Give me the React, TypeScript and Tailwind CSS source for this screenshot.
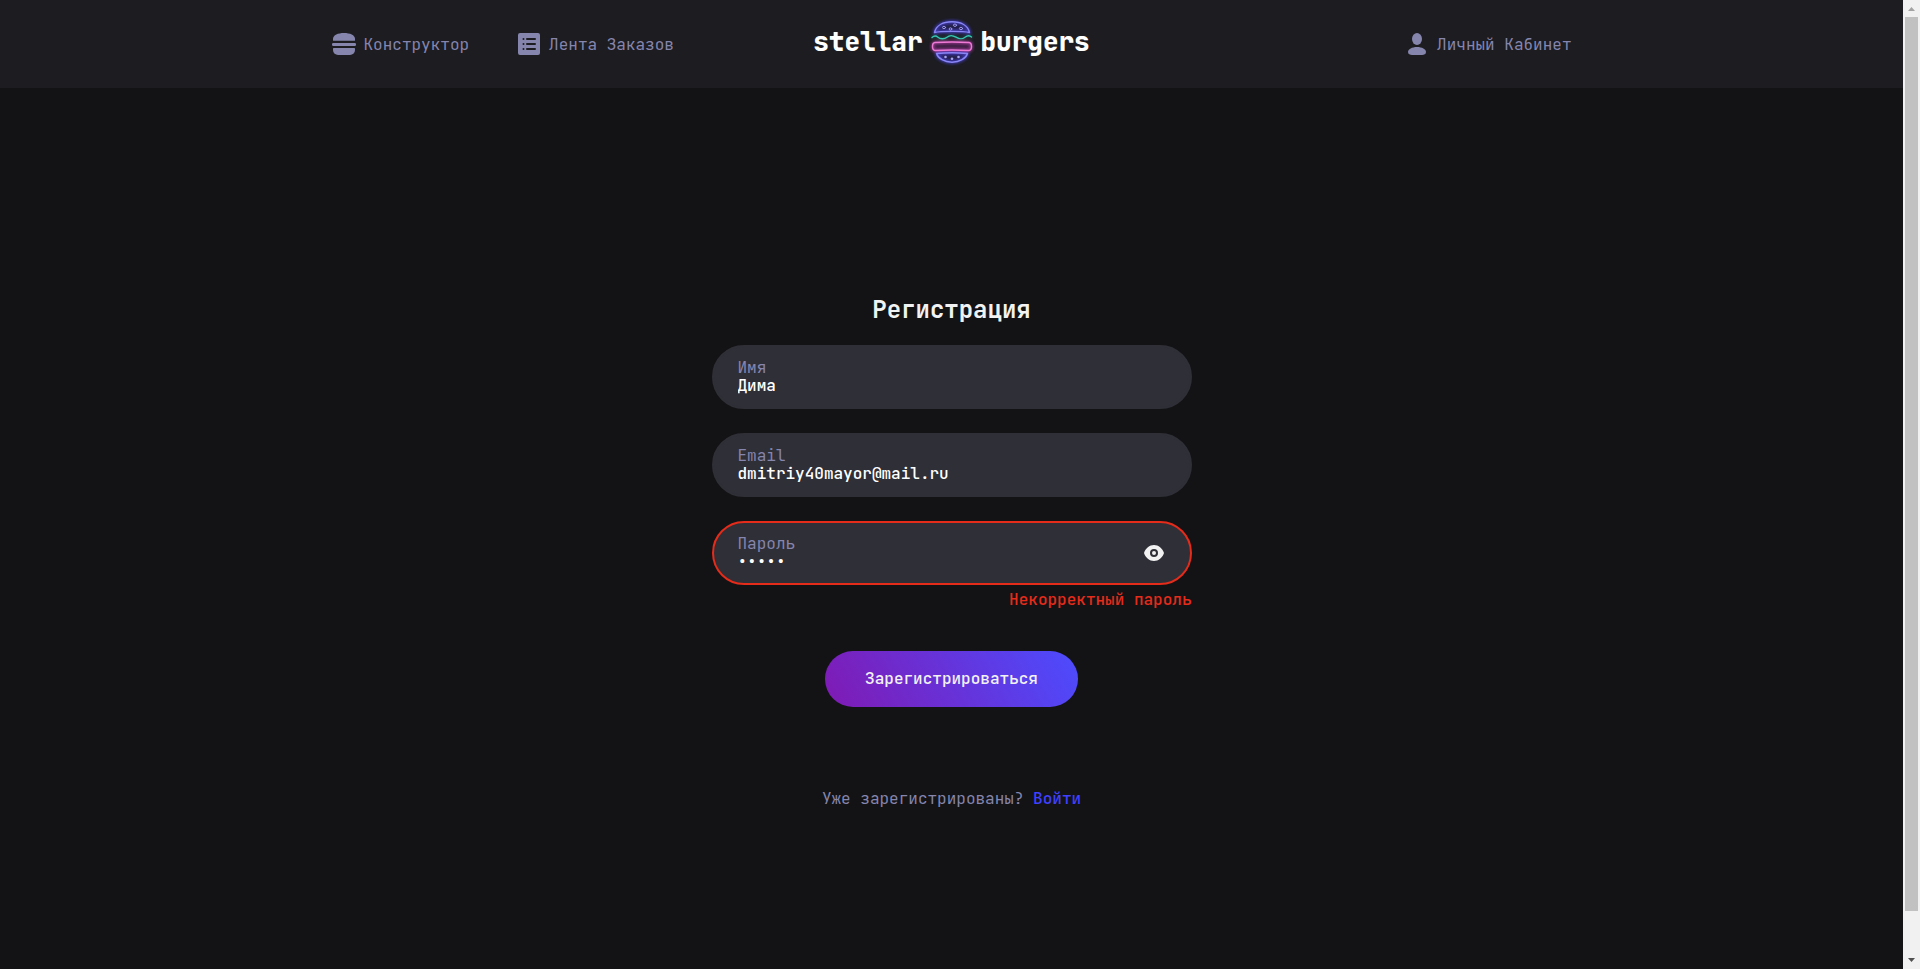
import React, { useState } from "react";

function BurgerIcon() {
  return (
    <svg width="24" height="24" viewBox="0 0 24 24" fill="currentColor" aria-hidden="true">
      <path d="M1 8.2V7C1 3 6 1 12 1s11 2 11 6v1.2a.6.6 0 0 1-.6.6H1.6a.6.6 0 0 1-.6-.6Z" />
      <rect x="0" y="11" width="24" height="3" rx="1.2" />
      <path d="M1.6 16h20.8a.6.6 0 0 1 .6.6V18a5 5 0 0 1-5 5H6a5 5 0 0 1-5-5v-1.4a.6.6 0 0 1 .6-.6Z" />
    </svg>
  );
}

function ListIcon() {
  return (
    <svg width="24" height="24" viewBox="0 0 24 24" fill="currentColor" aria-hidden="true">
      <path
        fillRule="evenodd"
        d="M3 1h18a2 2 0 0 1 2 2v18a2 2 0 0 1-2 2H3a2 2 0 0 1-2-2V3a2 2 0 0 1 2-2ZM6.500 6a1 1 0 0 0 0 2 1 1 0 0 0 0-2Zm0 5a1 1 0 0 0 0 2 1 1 0 0 0 0-2Zm0 5a1 1 0 0 0 0 2 1 1 0 0 0 0-2ZM10 6a1 1 0 0 0 0 2h8a1 1 0 0 0 0-2Zm0 5a1 1 0 0 0 0 2h8a1 1 0 0 0 0-2Zm0 5a1 1 0 0 0 0 2h8a1 1 0 0 0 0-2Z"
      />
    </svg>
  );
}

function ProfileIcon() {
  return (
    <svg width="24" height="24" viewBox="0 0 24 24" fill="currentColor" aria-hidden="true">
      <ellipse cx="12" cy="7" rx="5" ry="6" />
      <path d="M12 15c5 0 9 2.200 9 5 0 2.200-2 3-4 3H7c-2 0-4-.8-4-3 0-2.800 4-5 9-5Z" />
    </svg>
  );
}

function EyeIcon() {
  return (
    <svg width="24" height="24" viewBox="0 0 24 24" fill="currentColor" aria-hidden="true">
      <path
        fillRule="evenodd"
        d="M2 12c1.500-4.500 5.500-8 10-8s8.500 3.500 10 8c-1.500 4.500-5.500 8-10 8s-8.500-3.500-10-8Zm10-4a4 4 0 1 0 0 8 4 4 0 0 0 0-8Zm0 2a2 2 0 1 1 0 4 2 2 0 0 1 0-4Z"
      />
    </svg>
  );
}

function NeonBurger() {
  const top = "M7.500 15.500C9 8.500 16 4.800 25 4.800s16 3.700 17.500 10.700c-6-1.500-29-1.500-35 0Z";
  const lettuce =
    "M5 20.500C7 18.500 9 18.500 11 20.200S17 22.500 20 20.200 25 18 29 20.200 35 22.500 38 20.200 43 18.500 44.500 20";
  const patty = "M8 25.500q17-1 34 0 2.500.3 2.500 4t-2.500 4q-17-1-34 0-2.500-.3-2.500-4t2.500-4Z";
  const bottom = "M9.500 36.500q15.500-1.500 31 0c-1.500 5-8 8.700-15.500 8.700S11 41.500 9.500 36.500Z";
  return (
    <svg width="50" height="50" viewBox="0 0 50 50" fill="none" strokeLinejoin="round" strokeLinecap="round" aria-hidden="true">
      <defs>
        <filter id="glow" x="-30%" y="-50%" width="160%" height="200%">
          <feGaussianBlur stdDeviation="1.500" />
        </filter>
      </defs>
      <g filter="url(#glow)" strokeWidth="3" opacity=".85">
        <path d={top} stroke="#4a43d8" fill="#26234d" />
        <path d={patty} stroke="#a33c9c" fill="#3b1c42" />
        <path d={bottom} stroke="#4a43d8" fill="#26234d" />
        <path d={lettuce} stroke="#17615f" strokeWidth="2" />
      </g>
      <g strokeWidth="1.400">
        <path d={top} stroke="#8986f5" />
        <path d={lettuce} stroke="#35c7b4" />
        <path d={patty} stroke="#ee79d5" />
        <path d={bottom} stroke="#8986f5" />
      </g>
      <g stroke="#9a97f0" strokeWidth="1">
        <ellipse cx="17" cy="10.500" rx="1.600" ry="1.100" />
        <ellipse cx="28" cy="8.200" rx="1.600" ry="1.200" />
        <ellipse cx="23.500" cy="12" rx="1.300" ry="1.200" />
        <ellipse cx="34" cy="11.500" rx="1.600" ry="1.200" />
      </g>
      <g fill="#a6a3f2">
        <circle cx="18.500" cy="40" r="1.300" />
        <circle cx="25" cy="41.700" r="1.300" />
        <circle cx="31.500" cy="40" r="1.300" />
      </g>
    </svg>
  );
}

function Header() {
  return (
    <header className="flex h-[88px] justify-center bg-[#1c1c21] leading-[21px]">
      <div className="grid w-full max-w-[1240px] grid-cols-[1fr_auto_1fr] items-center">
        <nav className="flex items-center gap-12 text-[#8585ad]">
          <a href="#constructor" className="flex items-center gap-2">
            <BurgerIcon />
            Конструктор
          </a>
          <a href="#feed" className="flex items-center gap-2">
            <ListIcon />
            Лента Заказов
          </a>
        </nav>
        <a
          href="#home"
          className="mb-1 grid w-[290px] grid-cols-[minmax(0,1fr)_auto_minmax(0,1fr)] items-center gap-1 text-[26px] leading-6 font-extrabold text-white"
        >
          <span className="text-right">stellar</span>
          <NeonBurger />
          <span>burgers</span>
        </a>
        <a href="#profile" className="flex items-center gap-2 justify-self-end text-[#8585ad]">
          <ProfileIcon />
          Личный Кабинет
        </a>
      </div>
    </header>
  );
}

type FieldProps = {
  id: string;
  label: string;
  type: string;
  initial: string;
  invalid?: boolean;
  action?: React.ReactNode;
};

function Field({ id, label, type, initial, invalid, action }: FieldProps) {
  const [value, setValue] = useState(initial);
  return (
    <div
      className={
        invalid
          ? "flex h-16 items-center rounded-full border-2 border-[#e52b1a] bg-[#2f2f37] px-6"
          : "flex h-16 items-center rounded-full border-2 border-[#2f2f37] bg-[#2f2f37] px-6"
      }
    >
      <div className="flex grow flex-col leading-[18px]">
        <label htmlFor={id} className="text-[#8585ad]">
          {label}
        </label>
        <input
          id={id}
          type={type}
          value={value}
          aria-invalid={invalid}
          onChange={(e) => setValue(e.target.value)}
          className="h-[18px] w-full bg-transparent font-medium text-white outline-none"
        />
      </div>
      {action}
    </div>
  );
}

function RegisterForm() {
  const [visible, setVisible] = useState(false);
  return (
    <main className="flex flex-col items-center pt-[205px]">
      <form className="flex w-full max-w-[480px] flex-col" onSubmit={(e) => e.preventDefault()}>
        <h1 className="mb-[18px] text-center text-2xl leading-[34px] font-bold text-[#f2f2f3]">Регистрация</h1>
        <div className="flex flex-col gap-6">
          <Field id="name" label="Имя" type="text" initial="Дима" />
          <Field id="email" label="Email" type="email" initial="dmitriy40mayor@mail.ru" />
          <Field
            id="password"
            label="Пароль"
            type={visible ? "text" : "password"}
            initial="12345"
            invalid
            action={
              <button
                type="button"
                aria-label="Показать пароль"
                onClick={() => setVisible(!visible)}
                className="text-[#f2f2f3]"
              >
                <EyeIcon />
              </button>
            }
          />
        </div>
        <p className="mt-[3px] text-right font-medium text-[#e52b1a]">Некорректный пароль</p>
        <button
          type="submit"
          className="mt-[39px] h-14 self-center rounded-full bg-linear-[60deg,#801ab3_0%,#4c4cff_100%] px-10 font-medium text-[#f2f2f3]"
        >
          Зарегистрироваться
        </button>
      </form>
      <p className="mt-20 text-[#8585ad]">
        Уже зарегистрированы?{" "}
        <a href="#login" className="font-medium text-[#4040ff]">
          Войти
        </a>
      </p>
    </main>
  );
}

function Scrollbar() {
  return (
    <div className="flex w-[17px] flex-col items-center bg-[#f1f1f1]" aria-hidden="true">
      <svg width="17" height="17" viewBox="0 0 17 17" fill="#a3a3a3">
        <path d="M5 11 8.500 7 12 11Z" />
      </svg>
      <div className="w-[13px] grow bg-[#c1c1c1]" />
      <div className="h-[41px]" />
      <svg width="17" height="17" viewBox="0 0 17 17" fill="#505050">
        <path d="M5 6 8.500 10 12 6Z" />
      </svg>
    </div>
  );
}

export default function App() {
  return (
    <div className="flex h-screen overflow-hidden bg-[#131316] font-['JetBrains_Mono','DejaVu_Sans_Mono',monospace] text-base">
      <div className="grow">
        <Header />
        <RegisterForm />
      </div>
      <Scrollbar />
    </div>
  );
}
